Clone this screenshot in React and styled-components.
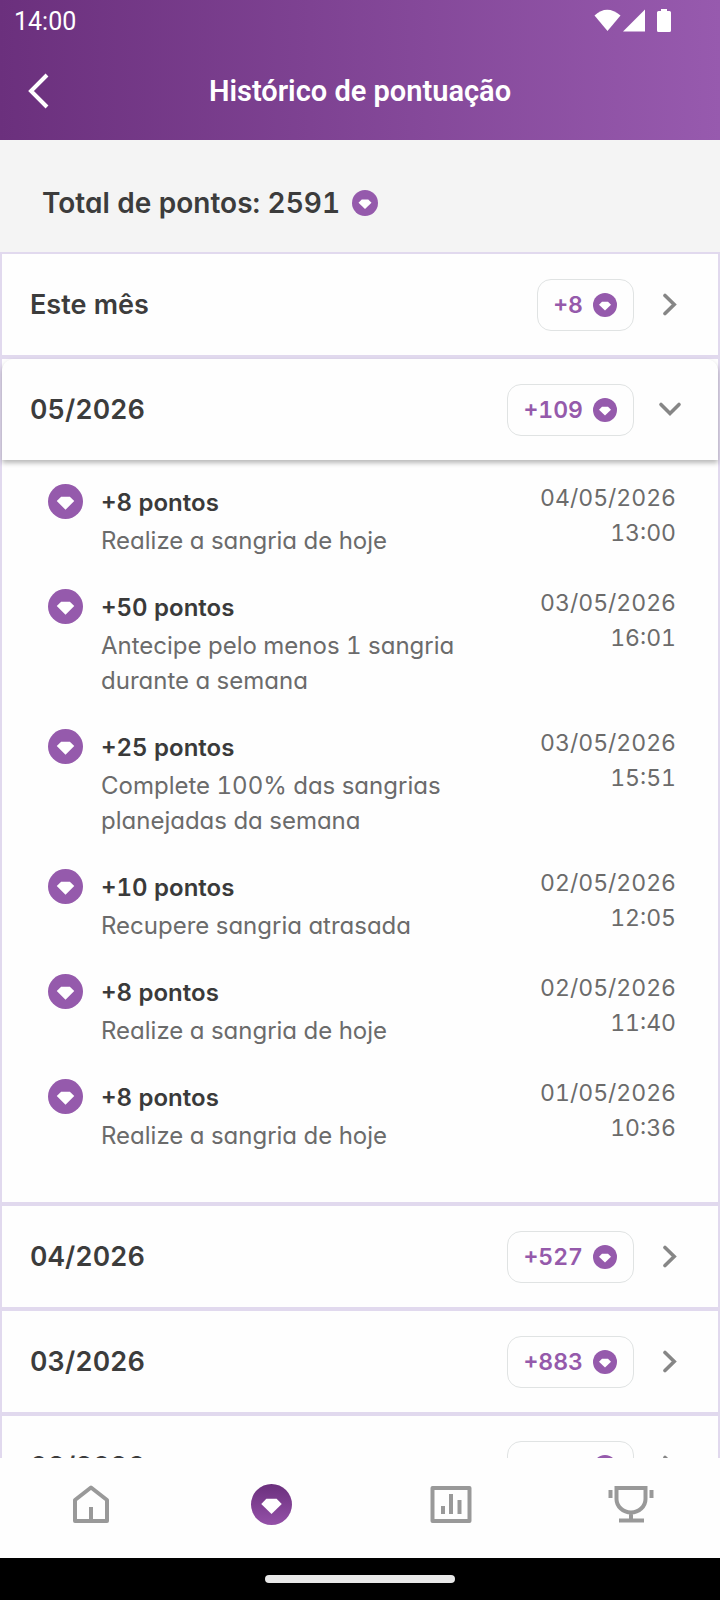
import React from 'react';
import styled, { createGlobalStyle } from 'styled-components';

const months = [
    { id: 'current', label: 'Este mês', points: 8, entries: [] },
    {
        id: '2026-05',
        label: '05/2026',
        points: 109,
        entries: [
            { points: 8, text: 'Realize a sangria de hoje', date: '04/05/2026', time: '13:00' },
            { points: 50, text: 'Antecipe pelo menos 1 sangria durante a semana', date: '03/05/2026', time: '16:01' },
            { points: 25, text: 'Complete 100% das sangrias planejadas da semana', date: '03/05/2026', time: '15:51' },
            { points: 10, text: 'Recupere sangria atrasada', date: '02/05/2026', time: '12:05' },
            { points: 8, text: 'Realize a sangria de hoje', date: '02/05/2026', time: '11:40' },
            { points: 8, text: 'Realize a sangria de hoje', date: '01/05/2026', time: '10:36' },
        ],
    },
    { id: '2026-04', label: '04/2026', points: 527, entries: [] },
    { id: '2026-03', label: '03/2026', points: 883, entries: [] },
    { id: '2026-02', label: '02/2026', points: 566, entries: [] },
];

const GlobalStyle = createGlobalStyle`
    * {
        box-sizing: border-box;
    }
    body {
        margin: 0;
        background: #fefefe;
        color: #3c3c3c;
        font-family: Inter, 'Open Sans', sans-serif;
        font-feature-settings: 'cv11', 'tnum';
    }
    h1, h2, p, ul {
        margin: 0;
        padding: 0;
    }
    ul {
        list-style: none;
    }
    button {
        border: 0;
        padding: 0;
        background: none;
        color: inherit;
        font: inherit;
        font-feature-settings: inherit;
        cursor: pointer;
    }
    svg {
        display: block;
        flex: none;
    }
`;

const Screen = styled.div`
    display: flex;
    flex-direction: column;
    height: 100vh;
`;

const Header = styled.header`
    flex: none;
    background: linear-gradient(90deg, #6b307d, #975aae);
    color: #fff;
    font-family: Roboto, sans-serif;
`;

const StatusBar = styled.div`
    display: flex;
    align-items: center;
    justify-content: space-between;
    height: 42px;
    padding: 0 48px 0 14px;
    font-size: 25px;
`;

const TitleBar = styled.div`
    display: grid;
    grid-template-columns: 76px 1fr 76px;
    align-items: center;
    height: 98px;
`;

const BackButton = styled.button`
    display: flex;
    align-items: center;
    height: 76px;
    padding-left: 26px;
`;

const Title = styled.h1`
    font-size: 29px;
    font-weight: 600;
    line-height: 36px;
    text-align: center;
`;

const Content = styled.main`
    flex: 1;
    min-height: 0;
    overflow-y: auto;
    scrollbar-width: none;
`;

const Total = styled.div`
    display: flex;
    align-items: center;
    gap: 12px;
    height: 112px;
    padding: 13px 42px 0;
    background: #f4f4f4;
    font-size: 28px;
    font-weight: 600;
`;

const MonthItem = styled.section`
    border: 2px solid #e1d9ee;
    background: #fefefe;
`;

const MonthHeader = styled.button`
    display: flex;
    align-items: center;
    width: 100%;
    height: 101px;
    padding: 0 36px 0 28px;
    text-align: left;
    ${(props) => props.$open && `
        border-radius: 12px 12px 0 0;
        box-shadow: 0 3px 5px rgba(0, 0, 0, 0.28);
    `}
`;

const MonthLabel = styled.span`
    flex: 1;
    font-size: 27px;
    font-weight: 600;
`;

const Chip = styled.span`
    display: flex;
    align-items: center;
    gap: 10px;
    height: 52px;
    margin-right: 24px;
    padding: 1px 16px 0 15px;
    border: 1px solid #e0e3e3;
    border-radius: 14px;
    color: #955aab;
    font-size: 23px;
    font-weight: 600;
`;

const Entries = styled.ul`
    display: flex;
    flex-direction: column;
    gap: 28px;
    padding: 21px 42px 49px 46px;
`;

const Entry = styled.li`
    display: flex;
    align-items: flex-start;
    font-size: 24px;
    line-height: 35px;
    color: #6b6b6b;

    svg {
        margin-top: 3px;
    }
`;

const EntryText = styled.div`
    flex: 1;
    padding: 4px 32px 0 18px;
`;

const EntryPoints = styled.h2`
    margin-bottom: 3px;
    color: #3a3a3a;
    font-size: 24px;
    font-weight: 600;
    line-height: 35px;
`;

const EntryDate = styled.div`
    font-size: 23px;
    text-align: right;
`;

const Nav = styled.nav`
    display: grid;
    grid-template-columns: repeat(4, 1fr);
    flex: none;
    height: 100px;
    background: #fefefe;
    color: #999;
`;

const NavLink = styled.a`
    display: flex;
    align-items: center;
    justify-content: center;
    padding: 0 0 8px 2px;
    color: inherit;
`;

const GestureBar = styled.div`
    display: flex;
    align-items: center;
    justify-content: center;
    flex: none;
    height: 42px;
    background: #000;

    &::after {
        content: '';
        width: 190px;
        height: 8px;
        border-radius: 4px;
        background: #e8e8e8;
    }
`;

function Gem({ size, gradient }) {
    return (
        <svg width={size} height={size} viewBox="0 0 36 36" aria-hidden="true">
            {gradient && (
                <linearGradient id="gem-fill" x1="0" y1="0" x2="0" y2="1">
                    <stop offset="0" stopColor="#6b307d" />
                    <stop offset="1" stopColor="#9450a8" />
                </linearGradient>
            )}
            <circle cx="18" cy="18" r="18" fill={gradient ? 'url(#gem-fill)' : '#955aac'} />
            <path d="M13.5 13h9l4.5 4.6L18 26.4 9 17.6z" fill="#fff" />
        </svg>
    );
}

function Chevron({ open }) {
    return (
        <svg width="24" height="24" viewBox="0 0 24 24" fill="none" stroke="#868686" strokeWidth="3.6" strokeLinecap="round" aria-hidden="true">
            <path d={open ? 'M3 6.5l9 9 9-9' : 'M7 2.5l9.2 9-9.2 9'} />
        </svg>
    );
}

function StatusIcons() {
    return (
        <svg width="78" height="24" viewBox="0 0 78 24" fill="#fff" aria-hidden="true">
            <path d="M0.5 6.5Q13-5 26.5 6.5L13.5 22z" />
            <path d="M29 22.5L51 0.5v22z" />
            <path d="M67 0h6v2h2.5q1.5 0 1.5 1.5V21.5q0 1.5-1.5 1.5h-11q-1.5 0-1.5-1.5V3.5q0-1.5 1.5-1.5H67z" />
        </svg>
    );
}

function HomeIcon() {
    return (
        <svg width="36" height="38" viewBox="0 0 36 38" fill="none" stroke="currentColor" strokeWidth="4" strokeLinejoin="round" aria-hidden="true">
            <path d="M2 15L18 2.5 34 15v21H2zM18 36V22" />
        </svg>
    );
}

function ReportIcon() {
    return (
        <svg width="42" height="38" viewBox="0 0 42 38" fill="none" stroke="currentColor" strokeWidth="4" aria-hidden="true">
            <rect x="2.5" y="3" width="37" height="33" strokeLinejoin="round" />
            <path d="M13 29v-8M21 29V9M29.5 29V15" />
        </svg>
    );
}

function TrophyIcon() {
    return (
        <svg width="46" height="38" viewBox="0 0 46 38" fill="none" stroke="currentColor" strokeWidth="4" aria-hidden="true">
            <path d="M8.5 3h29v11a14.5 13.5 0 0 1-29 0zM23 27v8M11 35.5h25" />
            <path d="M2.5 5v8M43.5 5v8" />
        </svg>
    );
}

function Month({ month, open, onToggle }) {
    return (
        <MonthItem>
            <MonthHeader type="button" aria-expanded={open} $open={open} onClick={onToggle}>
                <MonthLabel>{month.label}</MonthLabel>
                <Chip>
                    +{month.points}
                    <Gem size={24} />
                </Chip>
                <Chevron open={open} />
            </MonthHeader>
            {open && month.entries.length > 0 && (
                <Entries>
                    {month.entries.map((entry) => (
                        <Entry key={`${entry.date} ${entry.time}`}>
                            <Gem size={35} />
                            <EntryText>
                                <EntryPoints>+{entry.points} pontos</EntryPoints>
                                <p>{entry.text}</p>
                            </EntryText>
                            <EntryDate>
                                <p>{entry.date}</p>
                                <p>{entry.time}</p>
                            </EntryDate>
                        </Entry>
                    ))}
                </Entries>
            )}
        </MonthItem>
    );
}

export default function App() {
    const [openId, setOpenId] = React.useState('2026-05');

    return (
        <Screen>
            <GlobalStyle />
            <Header>
                <StatusBar>
                    <span>14:00</span>
                    <StatusIcons />
                </StatusBar>
                <TitleBar>
                    <BackButton type="button" aria-label="Voltar">
                        <svg width="24" height="36" viewBox="0 0 24 36" fill="none" stroke="#fff" strokeWidth="4" aria-hidden="true">
                            <path d="M21 2L5 18l16 16" />
                        </svg>
                    </BackButton>
                    <Title>Histórico de pontuação</Title>
                </TitleBar>
            </Header>
            <Content>
                <Total>
                    <span>Total de pontos: 2591</span>
                    <Gem size={26} />
                </Total>
                {months.map((month) => (
                    <Month
                        key={month.id}
                        month={month}
                        open={month.id === openId}
                        onToggle={() => setOpenId(month.id === openId ? null : month.id)}
                    />
                ))}
            </Content>
            <Nav>
                <NavLink href="#inicio" aria-label="Início"><HomeIcon /></NavLink>
                <NavLink href="#pontos" aria-label="Pontos" aria-current="page"><Gem size={41} gradient /></NavLink>
                <NavLink href="#relatorios" aria-label="Relatórios"><ReportIcon /></NavLink>
                <NavLink href="#ranking" aria-label="Ranking"><TrophyIcon /></NavLink>
            </Nav>
            <GestureBar />
        </Screen>
    );
}
